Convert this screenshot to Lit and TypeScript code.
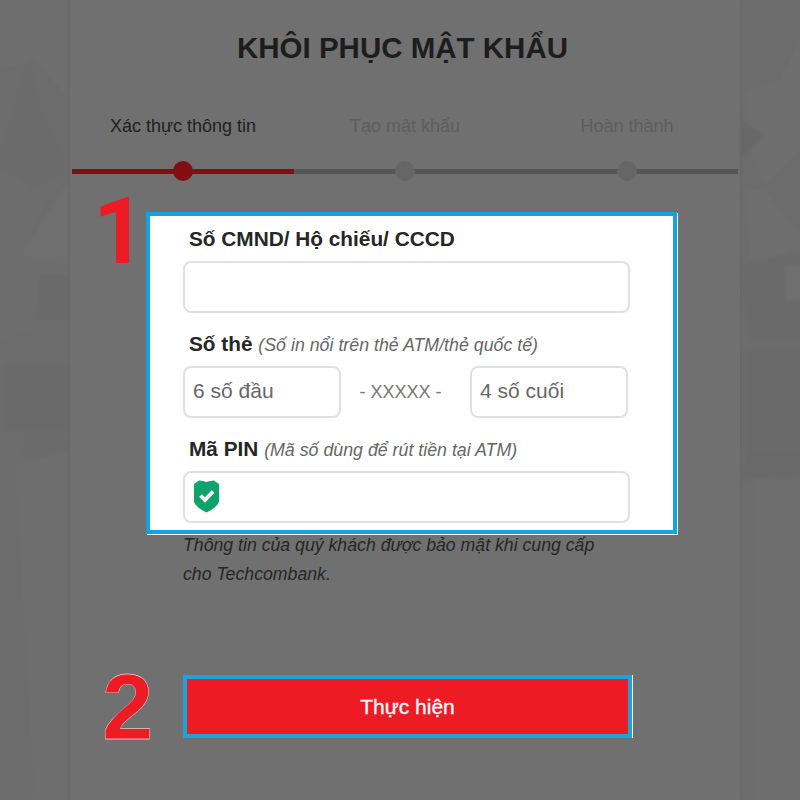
import { LitElement, html, css } from 'lit';
import { customElement } from 'lit/decorators.js';

@customElement('app-root')
export class AppRoot extends LitElement {
  static styles = css`
    :host {
      display: block;
      width: 800px;
      height: 800px;
      overflow: hidden;
      font-family: "Liberation Sans", Arial, sans-serif;
    }

    .page {
      display: flex;
      height: 800px;
      background: #6c6c6c;
    }

    .side {
      flex: none;
      display: block;
      width: 70px;
      height: 800px;
      filter: blur(1.5px);
    }

    .side.right {
      width: 60px;
    }

    .panel {
      position: relative;
      flex: none;
      width: 670px;
      height: 800px;
      box-sizing: border-box;
      background: #707070;
      padding-top: 29px;
      box-shadow: 0 0 3px #626262;
    }

    .title {
      margin: 0;
      text-align: center;
      font-size: 29.5px;
      line-height: 38px;
      font-weight: 700;
      color: #1d1d1d;
      padding-right: 5px;
    }

    .steps {
      display: grid;
      grid-template-columns: repeat(3, 222px);
      margin: 48px 0 0 2px;
    }

    .step {
      display: flex;
      flex-direction: column;
      align-items: center;
    }

    .step-label {
      font-size: 18px;
      line-height: 22px;
      color: #5e5e5e;
    }

    .step.active .step-label {
      color: #1f1f1f;
    }

    .step-track {
      position: relative;
      width: 100%;
      height: 20px;
      margin-top: 24px;
      display: flex;
      align-items: center;
      justify-content: center;
    }

    .step-track::before {
      content: '';
      position: absolute;
      left: 0;
      right: 0;
      top: 8px;
      height: 5px;
      background: #565656;
    }

    .step.active .step-track::before {
      background: #820d12;
    }

    .step-dot {
      position: relative;
      width: 20px;
      height: 20px;
      border-radius: 50%;
      background: #666;
    }

    .step.active .step-dot {
      background: #820d12;
    }

    .form-box {
      position: relative;
      box-sizing: border-box;
      width: 531px;
      height: 322px;
      margin: 31px 0 0 76px;
      padding: 11px 48px 0 33px;
      background: #fff;
      border: 4px solid #12a3df;
      box-shadow: 1px 1px 0 #fff;
    }

    .marker {
      position: absolute;
      font-weight: 700;
      font-size: 92px;
      line-height: 92px;
      color: #ed1c24;
    }

    .marker.one {
      font-family: Roboto, "Liberation Sans", sans-serif;
      font-size: 92px;
      left: -57px;
      top: -30px;
    }

    .field-label {
      font-size: 20.8px;
      line-height: 24px;
      font-weight: 700;
      color: #262626;
      padding-left: 6px;
      white-space: nowrap;
    }

    .field-label em {
      font-size: 17.8px;
      font-weight: 400;
      color: #666;
    }

    .input {
      box-sizing: border-box;
      height: 52px;
      width: 447px;
      border: 2px solid #e0e0e0;
      border-radius: 8px;
      background: #fff;
      display: flex;
      align-items: center;
      padding: 0 0 3px 8px;
      font-size: 21px;
      color: #666;
    }

    .field {
      margin-bottom: 19px;
    }

    .field-label + .input,
    .field-label + .card-row {
      margin-top: 9px;
    }

    .marker + .field .field-label + .input {
      margin-top: 10px;
    }

    .card-row {
      display: flex;
      align-items: center;
      width: 445px;
    }

    .card-row .input {
      width: 158px;
      flex: none;
    }

    .card-sep {
      flex: 1;
      text-align: center;
      font-size: 18px;
      color: #777;
      padding: 1px 10px 0 0;
    }

    .shield {
      display: block;
      width: 27px;
      height: 34px;
    }

    .note {
      margin: -3px 0 0 113px;
      font-size: 17.7px;
      line-height: 29px;
      font-style: italic;
      color: #262626;
      width: 425px;
    }

    .submit {
      position: relative;
      box-sizing: border-box;
      display: flex;
      align-items: center;
      justify-content: center;
      width: 449px;
      height: 63px;
      margin: 86px 0 0 113px;
      background: #ed1c24;
      border: 4px solid #1ea2dc;
      box-shadow: 1px 0 0 #fff;
      color: #fff;
      font-size: 21px;
      -webkit-text-stroke: 0.3px #fff;
    }

    .marker.two {
      left: -85px;
      top: -18px;
    }
  `;

  private renderLeftSide() {
    return html`
      <svg class="side" viewBox="0 0 70 800">
        <path d="M0 0H70V100L35 60L0 70Z" fill="#6e6e6e" />
        <path d="M0 165L30 60L40 110L70 170L0 200Z" fill="#6b6b6b" />
        <path d="M20 255L70 180V265Z" fill="#6f6f6f" />
        <path d="M0 170L50 195L20 255L70 265V320L0 340Z" fill="#6d6d6d" />
        <path d="M40 275H70V320H35Z" fill="#6a6a6a" />
        <path d="M5 365H70V430H5Z" fill="#6a6a6a" />
        <path d="M30 435H70V470L20 455Z" fill="#6b6b6b" />
        <path d="M15 465L70 450V800H35Z" fill="#6e6e6e" />
      </svg>
    `;
  }

  private renderRightSide() {
    return html`
      <svg class="side right" viewBox="0 0 60 800">
        <path d="M5 90L40 80L60 40V150L25 185L10 150Z" fill="#6e6e6e" />
        <path d="M0 120L25 135L0 160Z" fill="#686868" />
        <path d="M5 190L25 190L60 235V265L10 260Z" fill="#6e6e6e" />
        <path d="M0 265L60 250V340H10Z" fill="#6a6a6a" />
        <path d="M45 265H60V300H45Z" fill="#6f6f6f" />
        <path d="M5 350H60V450H5Z" fill="#6a6a6a" />
        <path d="M10 450H60V475L0 480Z" fill="#696969" />
        <path d="M15 480H60V800H15Z" fill="#6e6e6e" />
      </svg>
    `;
  }

  private renderStep(label: string, active = false) {
    return html`
      <div class="step ${active ? 'active' : ''}">
        <div class="step-label">${label}</div>
        <div class="step-track"><div class="step-dot"></div></div>
      </div>
    `;
  }

  render() {
    return html`
      <div class="page">
        ${this.renderLeftSide()}
        <main class="panel">
          <h1 class="title">KHÔI PHỤC MẬT KHẨU</h1>
          <div class="steps">
            ${this.renderStep('Xác thực thông tin', true)}
            ${this.renderStep('Tạo mật khẩu')}
            ${this.renderStep('Hoàn thành')}
          </div>

          <div class="form-box">
            <span class="marker one">1</span>
            <div class="field">
              <div class="field-label">Số CMND/ Hộ chiếu/ CCCD</div>
              <div class="input"></div>
            </div>
            <div class="field">
              <div class="field-label">Số thẻ <em>(Số in nổi trên thẻ ATM/thẻ quốc tế)</em></div>
              <div class="card-row">
                <div class="input">6 số đầu</div>
                <div class="card-sep">- XXXXX -</div>
                <div class="input">4 số cuối</div>
              </div>
            </div>
            <div class="field">
              <div class="field-label">Mã PIN <em>(Mã số dùng để rút tiền tại ATM)</em></div>
              <div class="input">
                <svg class="shield" viewBox="0 0 27 34">
                  <path d="M6 1.5Q10 1.5 13.5 3Q17 1.5 21 1.5L26 5V22C26 26 19 31 13.5 33.5C8 31 1 26 1 22V5Z" fill="#0fa36b" />
                  <path d="M7.5 16.5L12 21L20 12.5" fill="none" stroke="#fff" stroke-width="3.8" />
                </svg>
              </div>
            </div>
          </div>

          <p class="note">Thông tin của quý khách được bảo mật khi cung cấp cho Techcombank.</p>

          <div class="submit">
            <span class="marker two">2</span>
            Thực hiện
          </div>
        </main>
        ${this.renderRightSide()}
      </div>
    `;
  }
}
